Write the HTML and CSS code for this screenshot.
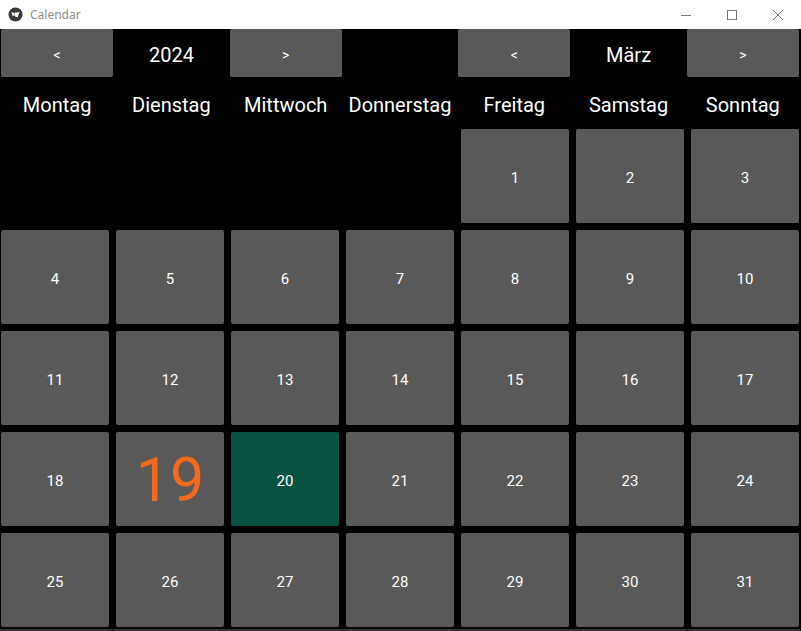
FILE: index.html
```html
<!DOCTYPE html>
<html lang="de">
<head>
<meta charset="utf-8">
<title>Calendar</title>
<link rel="stylesheet" href="styles.css">
</head>
<body>
<div class="window">
  <header class="titlebar">
    <div class="title-left">
      <svg class="app-icon" width="15" height="15" viewBox="0 0 16 16">
        <circle cx="8" cy="8" r="7.5" fill="#3a3a3a"/>
        <path d="M3.6 5.2 L6.2 6.4 L7 9.4 L4.8 9.2 Z" fill="#fff"/>
        <path d="M6.6 6.2 L12.4 5.2 L10.2 10.8 L7.4 10.2 Z" fill="#fff"/>
      </svg>
      <span class="title-text">Calendar</span>
    </div>
    <div class="controls">
      <span class="ctrl">
        <svg width="12" height="12" viewBox="0 0 12 12"><path d="M1 6.5 H11" stroke="#7a7a7a" stroke-width="1"/></svg>
      </span>
      <span class="ctrl">
        <svg width="12" height="12" viewBox="0 0 12 12"><rect x="1.5" y="1.5" width="9" height="9" fill="none" stroke="#7a7a7a" stroke-width="1"/></svg>
      </span>
      <span class="ctrl">
        <svg width="12" height="12" viewBox="0 0 12 12"><path d="M1 1 L11 11 M11 1 L1 11" stroke="#7a7a7a" stroke-width="1"/></svg>
      </span>
    </div>
  </header>
  <main class="app">
    <div class="nav">
      <button class="btn">&lt;</button>
      <div class="nav-label">2024</div>
      <button class="btn">&gt;</button>
      <div></div>
      <button class="btn">&lt;</button>
      <div class="nav-label">März</div>
      <button class="btn">&gt;</button>
    </div>
    <div class="weekdays">
      <div>Montag</div>
      <div>Dienstag</div>
      <div>Mittwoch</div>
      <div>Donnerstag</div>
      <div>Freitag</div>
      <div>Samstag</div>
      <div>Sonntag</div>
    </div>
    <div class="days">
      <div class="empty"></div>
      <div class="empty"></div>
      <div class="empty"></div>
      <div class="empty"></div>
      <button class="day">1</button>
      <button class="day">2</button>
      <button class="day">3</button>
      <button class="day">4</button>
      <button class="day">5</button>
      <button class="day">6</button>
      <button class="day">7</button>
      <button class="day">8</button>
      <button class="day">9</button>
      <button class="day">10</button>
      <button class="day">11</button>
      <button class="day">12</button>
      <button class="day">13</button>
      <button class="day">14</button>
      <button class="day">15</button>
      <button class="day">16</button>
      <button class="day">17</button>
      <button class="day">18</button>
      <button class="day today">19</button>
      <button class="day selected">20</button>
      <button class="day">21</button>
      <button class="day">22</button>
      <button class="day">23</button>
      <button class="day">24</button>
      <button class="day">25</button>
      <button class="day">26</button>
      <button class="day">27</button>
      <button class="day">28</button>
      <button class="day">29</button>
      <button class="day">30</button>
      <button class="day">31</button>
    </div>
  </main>
</div>
</body>
</html>
```

FILE: styles.css
```css
html, body {
  margin: 0;
  padding: 0;
  background: #000;
}

.window {
  width: 801px;
  height: 631px;
  overflow: hidden;
  display: flex;
  flex-direction: column;
  background: #000;
}

.titlebar {
  height: 29px;
  flex: 0 0 29px;
  background: #fff;
  display: flex;
  align-items: center;
  justify-content: space-between;
}

.title-left {
  display: flex;
  align-items: center;
  padding-left: 8px;
  gap: 7px;
}

.app-icon {
  display: block;
}

.title-text {
  font-family: "Noto Sans", "Open Sans", sans-serif;
  font-size: 12px;
  color: #8f8f8f;
}

.controls {
  display: flex;
  height: 29px;
}

.ctrl {
  width: 46px;
  height: 29px;
  display: flex;
  align-items: center;
  justify-content: center;
}

.app {
  flex: 1;
  width: 800px;
  background: #000;
  font-family: Roboto, "Liberation Sans", sans-serif;
  color: #fff;
  border-bottom: 2px solid #333;
  box-sizing: border-box;
  display: flex;
  flex-direction: column;
}

.nav {
  display: grid;
  grid-template-columns: repeat(7, 1fr);
  height: 48px;
}

.btn {
  margin: 0 1px;
  height: 48px;
  border: none;
  border-radius: 2px;
  background: #595959;
  color: #fff;
  font-family: Roboto, "Liberation Sans", sans-serif;
  font-size: 14px;
  padding: 4px 0 0;
}

.nav-label {
  display: flex;
  align-items: center;
  justify-content: center;
  font-size: 20px;
  padding-top: 3px;
}

.weekdays {
  display: grid;
  grid-template-columns: repeat(7, 1fr);
  height: 52px;
  padding-top: 4px;
  box-sizing: border-box;
  align-items: center;
  text-align: center;
  font-size: 20px;
}

.days {
  display: grid;
  grid-template-columns: repeat(7, 108px);
  grid-auto-rows: 94px;
  gap: 7px;
  padding-left: 1px;
}

.day {
  border: none;
  border-radius: 2px;
  background: #595959;
  color: #fff;
  font-family: Roboto, "Liberation Sans", sans-serif;
  font-size: 15px;
  padding: 4px 0 0;
}

.day.today {
  color: #f26a1b;
  font-size: 61px;
  padding-top: 2px;
}

.day.selected {
  background: #075240;
}
```
